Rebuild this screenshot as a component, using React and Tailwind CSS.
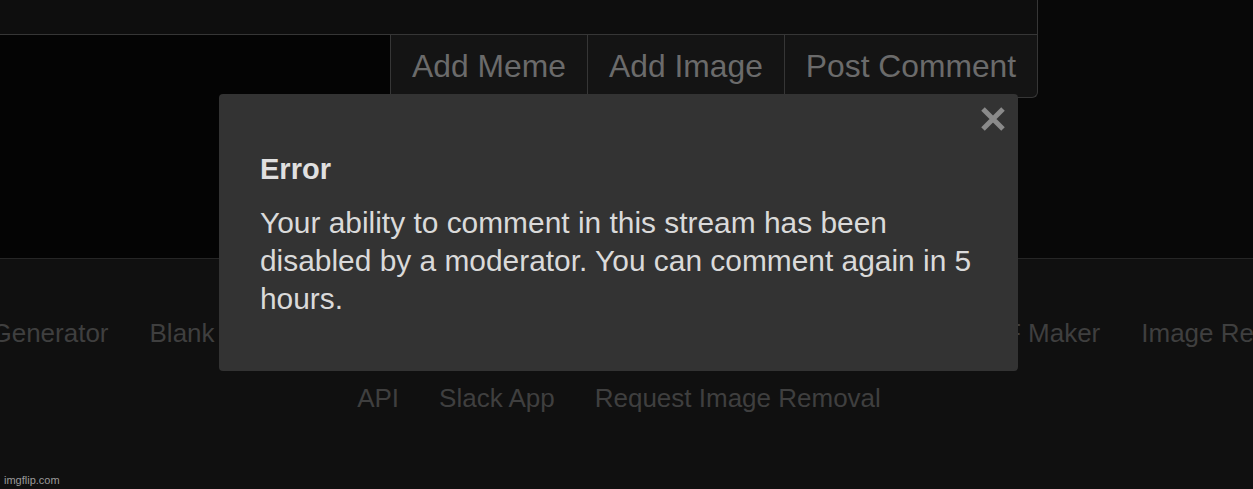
const topLinks = [
  "Meme Generator",
  "Blank Meme Templates",
  "Images to GIF",
  "Make a Demotivational",
  "GIF Maker",
  "Image Resizer",
];

const bottomLinks = ["API", "Slack App", "Request Image Removal"];

const actions = [
  { label: "Add Meme", width: "w-[197px]" },
  { label: "Add Image", width: "w-[197px]" },
  { label: "Post Comment", width: "w-[253px]" },
];

function CloseIcon() {
  return (
    <svg width="28" height="28" viewBox="0 0 28 28" fill="none">
      <path d="M4 4L24 24M24 4L4 24" stroke="#8a8a8a" strokeWidth="5" />
    </svg>
  );
}

export default function App() {
  return (
    <div className="relative w-full h-[489px] overflow-hidden bg-[#080808] font-['Liberation_Sans',Arial,sans-serif]">
      {/* comment box */}
      <div className="h-[258px] flex flex-col">
        <div className="w-[1038px] h-[35px] bg-[#0e0e0e] border-r border-b border-[#363636]" />
        <div className="flex flex-1">
          <div className="w-[390px] bg-[#040404]" />
          <div className="flex h-[63px] bg-[#141414] border-r border-b border-[#363636] rounded-br-[6px]">
            {actions.map((a) => (
              <button
                key={a.label}
                className={`${a.width} h-full pt-[2px] border-l border-[#363636] text-[31.8px] leading-none text-[#6b6b6b] whitespace-nowrap`}
              >
                {a.label}
              </button>
            ))}
          </div>
        </div>
      </div>

      {/* footer */}
      <div className="h-[231px] border-t border-[#262626] bg-[#101010] pt-[59px]">
        <div className="flex gap-[41px] -ml-[88px] text-[26px] leading-[30px] text-[#3f3f3f] whitespace-nowrap">
          {topLinks.map((l, i) => (
            <span key={l} className={i === 3 ? "mr-[6px]" : ""}>
              {l}
            </span>
          ))}
        </div>
        <div className="flex justify-center gap-[40px] mt-[35px] pr-[15px] text-[26px] leading-[30px] text-[#3f3f3f] whitespace-nowrap">
          {bottomLinks.map((l) => (
            <span key={l}>{l}</span>
          ))}
        </div>
      </div>

      <div className="absolute left-[4px] bottom-[3px] text-[11px] leading-none text-[#9a9a9a]">
        imgflip.com
      </div>

      {/* error modal */}
      <div className="absolute left-[219px] top-[94px] w-[799px] h-[277px] rounded-[4px] bg-[#333333] pl-[41px] pr-[30px] pt-[58px]">
        <button className="absolute right-[11px] top-[11px]">
          <CloseIcon />
        </button>
        <div className="text-[29px] leading-[34px] font-bold text-[#e0e0e0]">Error</div>
        <p className="mt-[18px] w-[722px] text-[29.9px] leading-[38px] text-[#dadada]">
          Your ability to comment in this stream has been disabled by a moderator. You can comment again in 5 hours.
        </p>
      </div>
    </div>
  );
}
